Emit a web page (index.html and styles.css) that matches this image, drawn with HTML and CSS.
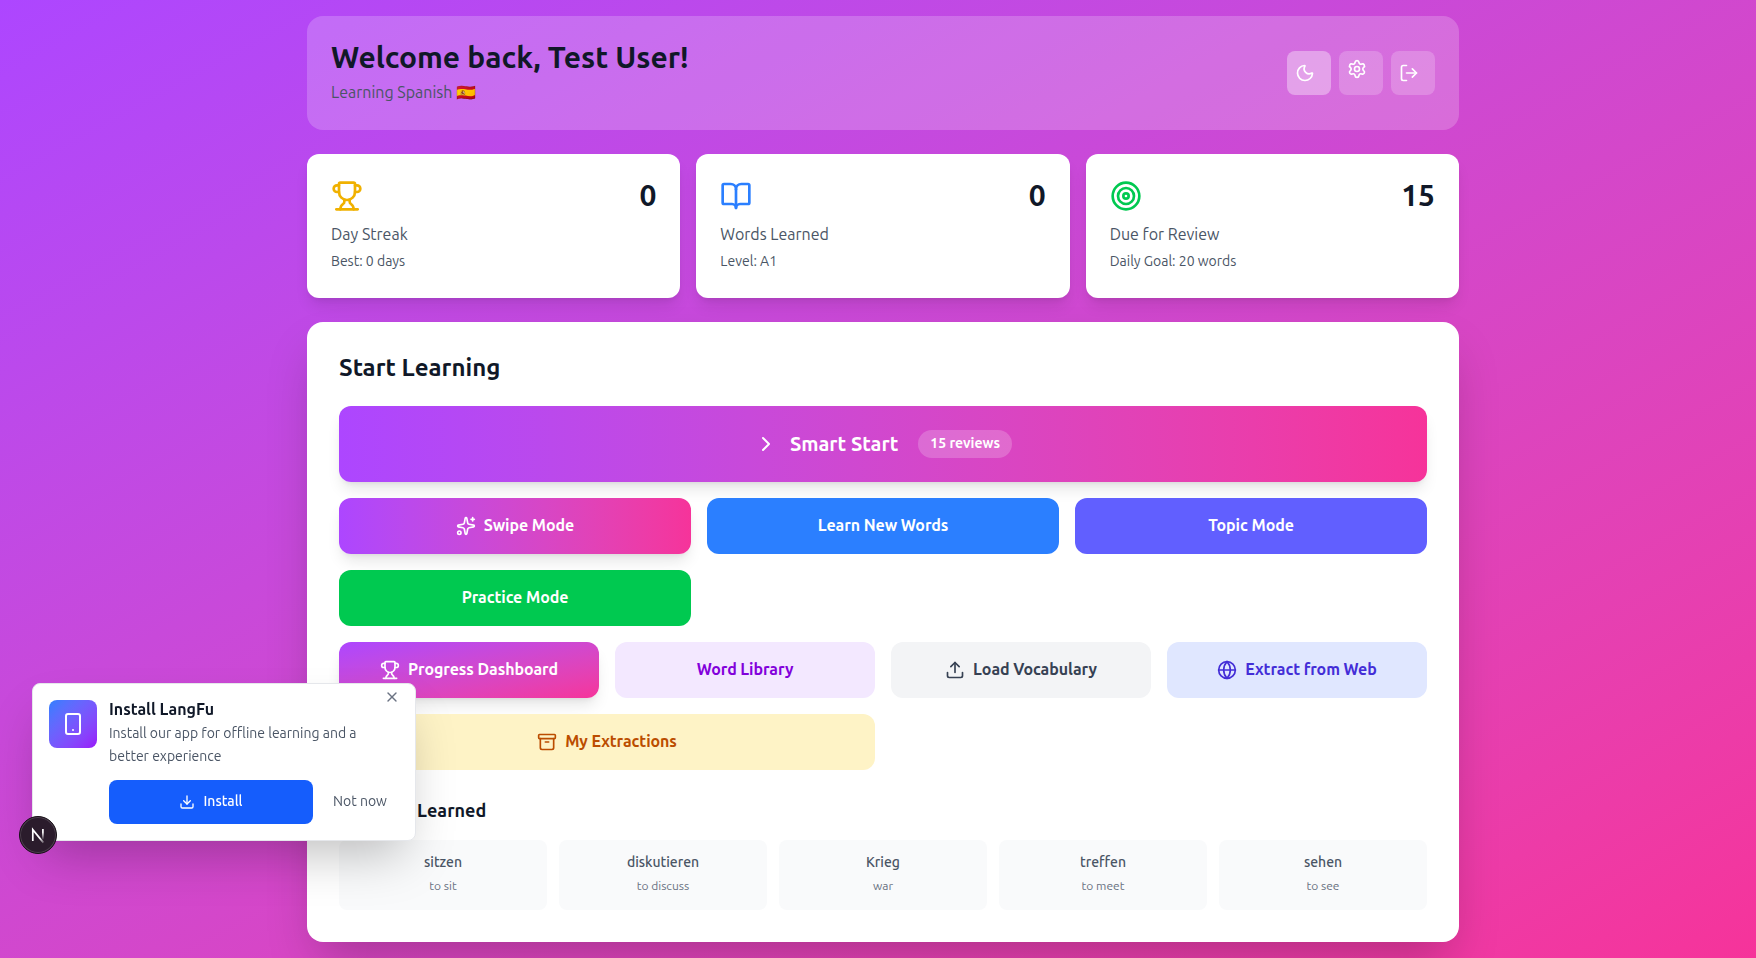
FILE: index.html
```html
<!DOCTYPE html>
<html lang="en">
<head>
<meta charset="utf-8">
<title>LangFu</title>
<link rel="stylesheet" href="styles.css">
</head>
<body>
<svg class="sprite" aria-hidden="true">
  <symbol id="trophy" viewBox="0 0 24 24"><path d="M10 14.66v1.626a2 2 0 0 1-.976 1.696A5 5 0 0 0 7 21.978"/><path d="M14 14.66v1.626a2 2 0 0 0 .976 1.696A5 5 0 0 1 17 21.978"/><path d="M18 9h1.5a1 1 0 0 0 0-5H18"/><path d="M4 22h16"/><path d="M6 9a6 6 0 0 0 12 0V3a1 1 0 0 0-1-1H7a1 1 0 0 0-1 1z"/><path d="M6 9H4.5a1 1 0 0 1 0-5H6"/></symbol>
</svg>
<main class="container">
  <header class="header">
    <div class="greeting">
      <h1>Welcome back, Test User!</h1>
      <p>Learning Spanish 🇪🇸</p>
    </div>
    <nav class="actions">
      <button class="action active"><svg class="icon" viewBox="0 0 24 24"><path d="M20.985 12.486a9 9 0 1 1-9.473-9.472c.405-.022.617.46.402.803a6 6 0 0 0 8.268 8.268c.344-.215.825-.004.803.401"/></svg></button>
      <a class="action link"><svg class="icon" viewBox="0 0 24 24"><path d="M9.671 4.136a2.34 2.34 0 0 1 4.659 0 2.34 2.34 0 0 0 3.319 1.915 2.34 2.34 0 0 1 2.33 4.033 2.34 2.34 0 0 0 0 3.831 2.34 2.34 0 0 1-2.33 4.033 2.34 2.34 0 0 0-3.319 1.915 2.34 2.34 0 0 1-4.659 0 2.34 2.34 0 0 0-3.32-1.915 2.34 2.34 0 0 1-2.33-4.033 2.34 2.34 0 0 0 0-3.831A2.34 2.34 0 0 1 6.35 6.051a2.34 2.34 0 0 0 3.319-1.915"/><circle cx="12" cy="12" r="3"/></svg></a>
      <button class="action"><svg class="icon" viewBox="0 0 24 24"><path d="m16 17 5-5-5-5"/><path d="M21 12H9"/><path d="M9 21H5a2 2 0 0 1-2-2V5a2 2 0 0 1 2-2h4"/></svg></button>
    </nav>
  </header>

  <section class="stats">
    <article class="stat">
      <div class="stat-top"><svg class="icon large gold"><use href="#trophy"/></svg><strong>0</strong></div>
      <p class="label">Day Streak</p>
      <p class="detail">Best: 0 days</p>
    </article>
    <article class="stat">
      <div class="stat-top"><svg class="icon large blue" viewBox="0 0 24 24"><path d="M12 7v14"/><path d="M3 18a1 1 0 0 1-1-1V4a1 1 0 0 1 1-1h5a4 4 0 0 1 4 4 4 4 0 0 1 4-4h5a1 1 0 0 1 1 1v13a1 1 0 0 1-1 1h-6a3 3 0 0 0-3 3 3 3 0 0 0-3-3z"/></svg><strong>0</strong></div>
      <p class="label">Words Learned</p>
      <p class="detail">Level: A1</p>
    </article>
    <article class="stat">
      <div class="stat-top"><svg class="icon large green" viewBox="0 0 24 24"><circle cx="12" cy="12" r="10"/><circle cx="12" cy="12" r="6"/><circle cx="12" cy="12" r="2"/></svg><strong>15</strong></div>
      <p class="label">Due for Review</p>
      <p class="detail">Daily Goal: 20 words</p>
    </article>
  </section>

  <section class="panel">
    <h2>Start Learning</h2>
    <div class="menu">
      <button class="smart">
        <svg class="icon medium" viewBox="0 0 24 24"><path d="m9 18 6-6-6-6"/></svg>
        <span>Smart Start</span>
        <span class="pill">15 reviews</span>
      </button>
      <div class="modes">
        <button class="btn swipe"><svg class="icon" viewBox="0 0 24 24"><path d="M11.017 2.814a1 1 0 0 1 1.966 0l1.051 5.558a2 2 0 0 0 1.594 1.594l5.558 1.051a1 1 0 0 1 0 1.966l-5.558 1.051a2 2 0 0 0-1.594 1.594l-1.051 5.558a1 1 0 0 1-1.966 0l-1.051-5.558a2 2 0 0 0-1.594-1.594l-5.558-1.051a1 1 0 0 1 0-1.966l5.558-1.051a2 2 0 0 0 1.594-1.594z"/><path d="M20 2v4"/><path d="M22 4h-4"/><circle cx="4" cy="20" r="2"/></svg><span>Swipe Mode</span></button>
        <button class="btn learn"><span>Learn New Words</span></button>
        <button class="btn topic"><span>Topic Mode</span></button>
        <button class="btn practice"><span>Practice Mode</span></button>
      </div>
      <div class="tools">
        <button class="btn progress"><svg class="icon"><use href="#trophy"/></svg><span>Progress Dashboard</span></button>
        <button class="btn library"><span>Word Library</span></button>
        <button class="btn load"><svg class="icon" viewBox="0 0 24 24"><path d="M12 3v12"/><path d="m17 8-5-5-5 5"/><path d="M21 15v4a2 2 0 0 1-2 2H5a2 2 0 0 1-2-2v-4"/></svg><span>Load Vocabulary</span></button>
        <button class="btn extract"><svg class="icon" viewBox="0 0 24 24"><circle cx="12" cy="12" r="10"/><path d="M12 2a14.5 14.5 0 0 0 0 20 14.5 14.5 0 0 0 0-20"/><path d="M2 12h20"/></svg><span>Extract from Web</span></button>
        <button class="btn extractions"><svg class="icon" viewBox="0 0 24 24"><rect x="2" y="3" width="20" height="5" rx="1"/><path d="M4 8v11a2 2 0 0 0 2 2h12a2 2 0 0 0 2-2V8"/><path d="M10 12h4"/></svg><span>My Extractions</span></button>
      </div>
    </div>
    <h3>Recently Learned</h3>
    <div class="words">
      <div class="word"><b>sitzen</b><small>to sit</small></div>
      <div class="word"><b>diskutieren</b><small>to discuss</small></div>
      <div class="word"><b>Krieg</b><small>war</small></div>
      <div class="word"><b>treffen</b><small>to meet</small></div>
      <div class="word"><b>sehen</b><small>to see</small></div>
    </div>
  </section>
</main>

<aside class="prompt">
  <div class="app-icon"><svg class="icon medium" viewBox="0 0 24 24"><rect x="5" y="2" width="14" height="20" rx="2"/><path d="M12 18h.01"/></svg></div>
  <div class="prompt-body">
    <h4>Install LangFu</h4>
    <p>Install our app for offline learning and a better experience</p>
    <div class="prompt-actions">
      <button class="install"><svg class="icon small" viewBox="0 0 24 24"><path d="M12 15V3"/><path d="M21 15v4a2 2 0 0 1-2 2H5a2 2 0 0 1-2-2v-4"/><path d="m7 10 5 5 5-5"/></svg><span>Install</span></button>
      <button class="dismiss"><span>Not now</span></button>
    </div>
  </div>
  <button class="close"><svg class="icon small" viewBox="0 0 24 24"><path d="M18 6 6 18"/><path d="m6 6 12 12"/></svg></button>
</aside>

<div class="dev-badge">
  <svg width="36" height="36" viewBox="1 1 36 36" fill="none">
    <defs>
      <linearGradient id="diag" x1="17" y1="17" x2="25.5" y2="27" gradientUnits="userSpaceOnUse"><stop offset=".5" stop-color="#fff"/><stop offset="1" stop-color="#fff" stop-opacity=".15"/></linearGradient>
      <linearGradient id="stem" x1="0" y1="13" x2="0" y2="24" gradientUnits="userSpaceOnUse"><stop offset=".3" stop-color="#fff"/><stop offset="1" stop-color="#fff" stop-opacity="0"/></linearGradient>
    </defs>
    <path d="M13.8 25V13.6L24.4 26.6" stroke="url(#diag)" stroke-width="1.7"/>
    <path d="M23.9 13v10.5" stroke="url(#stem)" stroke-width="1.7"/>
  </svg>
</div>
</body>
</html>
```
FILE: styles.css
```css
* { box-sizing: border-box; margin: 0; }
body {
  height: 958px;
  overflow: hidden;
  padding: 16px 16px 16px 307px;
  font: 400 16px/24px Ubuntu, "Open Sans", "Noto Sans", sans-serif;
  color: #101828;
  background: linear-gradient(to bottom right in oklab, #ad46ff, #f6339a);
}
button { font: inherit; border: 0; padding: 0; background: none; color: inherit; }
.sprite { display: none; }
.icon { width: 20px; height: 20px; flex: none; fill: none; stroke: currentColor; stroke-width: 2; stroke-linecap: round; stroke-linejoin: round; }
.small { width: 16px; height: 16px; }
.medium { width: 24px; height: 24px; }
.large { width: 32px; height: 32px; }
.container { width: 1152px; display: flex; flex-direction: column; gap: 24px; }

.header { height: 114px; padding: 24px; border-radius: 16px; background: rgba(255,255,255,.2); display: flex; justify-content: space-between; }
h1 { font-size: 30px; line-height: 34px; font-weight: 600; }
.greeting p { margin-top: 6px; color: #4a5565; }
.actions { display: flex; gap: 8px; align-items: center; }
.action { width: 44px; height: 44px; padding: 0 8px; border-radius: 8px; background: rgba(255,255,255,.2); color: #fff; display: flex; align-items: center; }
.action.active { background: rgba(255,255,255,.36); }
.action.link { padding-top: 8px; align-items: flex-start; }

.stats { display: grid; grid-template-columns: repeat(3, 1fr); gap: 16px; }
.stat { height: 144px; padding: 24px; background: #fff; border-radius: 12px; box-shadow: 0 10px 15px -3px rgba(0,0,0,.1), 0 4px 6px -4px rgba(0,0,0,.1); }
.stat-top { height: 36px; display: flex; justify-content: space-between; align-items: center; margin-bottom: 8px; }
.stat strong { align-self: flex-start; font-size: 30px; line-height: 34px; font-weight: 600; }
.gold { color: #f0b100; }
.blue { color: #2b7fff; }
.green { color: #00c950; }
.label { color: #4a5565; }
.detail { margin-top: 5px; font-size: 14px; line-height: 20px; color: #4a5565; }

.panel { height: 620px; padding: 32px; border-radius: 16px; background: #fff; box-shadow: 0 25px 50px -12px rgba(0,0,0,.25); }
h2 { font-size: 24px; line-height: 27px; font-weight: 600; margin-bottom: 25px; }
.menu { display: flex; flex-direction: column; gap: 16px; }
.smart { height: 76px; border-radius: 12px; color: #fff; font-size: 20px; font-weight: 600; background: linear-gradient(to right in oklab, #ad46ff, #f6339a); box-shadow: 0 10px 15px -3px rgba(0,0,0,.1), 0 4px 6px -4px rgba(0,0,0,.1); display: flex; align-items: center; justify-content: center; gap: 12px; }
.smart .pill { margin-left: 8px; padding: 3px 12px 5px; border-radius: 14px; background: rgba(255,255,255,.2); font-size: 14px; line-height: 20px; }
.modes { display: grid; grid-template-columns: repeat(3, 1fr); gap: 16px; }
.tools { display: grid; grid-template-columns: repeat(4, 1fr); gap: 16px; }
.btn { height: 56px; border-radius: 12px; color: #fff; font-weight: 600; letter-spacing: -.08px; display: flex; align-items: center; justify-content: center; gap: 8px; }
.btn span { padding-bottom: 2px; }
.swipe { background: linear-gradient(to right in oklab, #ad46ff, #f6339a); }
.progress { background: linear-gradient(to bottom right in oklab, #ad46ff, #f6339a); }
.swipe, .progress { box-shadow: 0 10px 15px -3px rgba(0,0,0,.1), 0 4px 6px -4px rgba(0,0,0,.1); }
.learn { background: #2b7fff; }
.topic { background: #615fff; }
.practice { background: #00c950; }
.library { background: #f3e8ff; color: #8200db; }
.load { background: #f3f4f6; color: #364153; }
.extract { background: #e0e7ff; color: #432dd7; }
.extractions { grid-column: span 2; background: #fef3c6; color: #bb4d00; }
h3 { margin: 26px 0 16px; font-size: 18px; line-height: 28px; font-weight: 600; }
.words { display: grid; grid-template-columns: repeat(5, 1fr); gap: 12px; }
.word { height: 70px; padding: 12px; border-radius: 8px; background: #f9fafb; text-align: center; display: flex; flex-direction: column; gap: 6px; }
.word b { font-size: 14px; line-height: 20px; font-weight: 500; color: #4a5565; }
.word small { font-size: 12px; line-height: 16px; color: #6a7282; }

.prompt { position: fixed; left: 32px; top: 683px; width: 384px; height: 158px; padding: 16px; display: flex; gap: 12px; background: #fff; border: 1px solid #e5e7eb; border-radius: 8px; box-shadow: 0 25px 50px -12px rgba(0,0,0,.25); }
.app-icon { width: 48px; height: 48px; flex: none; border-radius: 8px; color: #fff; background: linear-gradient(to bottom right in oklab, #2b7fff, #9810fa); display: flex; align-items: center; justify-content: center; }
h4 { font-size: 16px; line-height: 18px; font-weight: 600; }
.prompt-body { flex: 1; }
.prompt p { width: 270px; margin-top: 4px; font-size: 14px; line-height: 23px; color: #4a5565; }
.prompt-actions { display: flex; gap: 8px; margin-top: 12px; font-size: 14px; }
.prompt-actions span { padding-bottom: 2px; }
.install { width: 204px; height: 44px; border-radius: 8px; background: #155dfc; color: #fff; font-weight: 500; display: flex; align-items: center; justify-content: center; gap: 8px; }
.dismiss { padding: 0 12px; color: #4a5565; display: flex; align-items: center; }
.close { position: absolute; right: 15px; top: 5px; width: 16px; height: 16px; color: #6a7282; display: flex; }
.dev-badge { position: fixed; left: 19px; top: 816px; width: 38px; height: 38px; border-radius: 50%; background: #2b1c2c; border: 1px solid #171017; box-shadow: inset 0 0 0 1px #4d404e; display: flex; align-items: center; justify-content: center; }
```
